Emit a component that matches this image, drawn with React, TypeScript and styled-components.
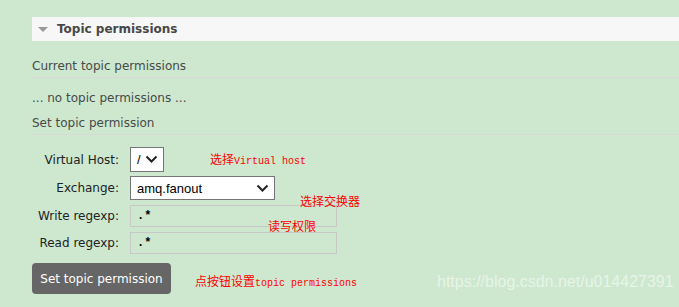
import React from "react";
import styled, { createGlobalStyle } from "styled-components";

const Global = createGlobalStyle`
  html, body { margin: 0; padding: 0; }
  body {
    background: #cde8cf;
    font-family: "DejaVu Sans", Verdana, sans-serif;
    color: #484848;
    width: 679px;
    height: 307px;
    overflow: hidden;
  }
`;

const Page = styled.div`
  position: relative;
  width: 679px;
  height: 307px;
  padding: 17px 0 0 32px;
  box-sizing: border-box;
`;

const SectionHeader = styled.div`
  height: 24px;
  background: #f7f7f7;
  display: flex;
  align-items: center;
  padding-left: 6px;
  gap: 9px;
  font-weight: bold;
  font-size: 12px;
  color: #484848;
`;

const Tri = styled.span`
  width: 0;
  height: 0;
  border-left: 5px solid transparent;
  border-right: 5px solid transparent;
  border-top: 5px solid #999;
  margin-top: 1px;
`;

const SubHeading = styled.div<{ $top: number }>`
  font-size: 12px;
  margin-top: ${(p) => p.$top}px;
  padding-bottom: 4px;
  border-bottom: 1px solid #d9d9d9;
  line-height: 14px;
`;

const Para = styled.div`
  font-size: 12px;
  line-height: 14px;
  margin-top: 13px;
`;

const Form = styled.div`
  display: grid;
  grid-template-columns: 87px auto;
  column-gap: 11px;
  row-gap: 4px;
  margin-top: 12px;
  align-items: center;
  justify-items: start;
`;

const Label = styled.label`
  justify-self: end;
  font-size: 12px;
  color: #222;
`;

const Select = styled.div<{ $w: number; $h: number }>`
  width: ${(p) => p.$w}px;
  height: ${(p) => p.$h}px;
  box-sizing: border-box;
  border: 1px solid #767676;
  background: #fff;
  display: flex;
  align-items: center;
  justify-content: space-between;
  padding: 0 5px 0 6px;
  font-family: "Liberation Sans", Arial, sans-serif;
  font-size: 13px;
  color: #000;
`;

const Input = styled.div`
  width: 207px;
  height: 22px;
  box-sizing: border-box;
  border: 1px solid #c8c8c8;
  display: flex;
  align-items: center;
  padding-left: 6px;
  font-family: "Liberation Mono", monospace;
  font-weight: bold;
  font-size: 12px;
  color: #000;
  margin-top: 1px;
`;

const Button = styled.button`
  margin-top: 9px;
  width: 139px;
  height: 31px;
  border: none;
  border-radius: 4px;
  background: #666666;
  color: #fff;
  font-family: "DejaVu Sans", Verdana, sans-serif;
  font-size: 12px;
  padding: 0;
`;

const Note = styled.div<{ $x: number; $y: number }>`
  position: absolute;
  left: ${(p) => p.$x}px;
  top: ${(p) => p.$y}px;
  color: #ff0000;
  white-space: nowrap;
  display: flex;
  align-items: baseline;
`;

const Cjk = styled.span`
  font-family: "Noto Sans CJK SC", sans-serif;
  font-size: 12px;
`;

const Mono = styled.span`
  font-family: "Liberation Mono", monospace;
  font-size: 10px;
`;

const Watermark = styled.div`
  position: absolute;
  left: 437px;
  top: 273px;
  font-family: "Liberation Sans", Arial, sans-serif;
  font-size: 16px;
  color: rgba(255, 255, 255, 0.55);
  white-space: nowrap;
`;

const Chevron = () => (
  <svg width="13" height="9" viewBox="0 0 13 9">
    <path d="M1.5 1.5 L6.5 6.5 L11.5 1.5" fill="none" stroke="#222" strokeWidth="2" />
  </svg>
);

export default function App() {
  return (
    <>
      <Global />
      <Page>
        <SectionHeader>
          <Tri />
          Topic permissions
        </SectionHeader>
        <SubHeading $top={18}>Current topic permissions</SubHeading>
        <Para>... no topic permissions ...</Para>
        <SubHeading $top={11}>Set topic permission</SubHeading>
        <Form>
          <Label>Virtual Host:</Label>
          <Select $w={34} $h={25}>
            / <Chevron />
          </Select>
          <Label>Exchange:</Label>
          <Select $w={145} $h={24}>
            amq.fanout <Chevron />
          </Select>
          <Label>Write regexp:</Label>
          <Input>.*</Input>
          <Label>Read regexp:</Label>
          <Input>.*</Input>
        </Form>
        <Button>Set topic permission</Button>
        <Note $x={210} $y={150}>
          <Cjk>选择</Cjk>
          <Mono>Virtual host</Mono>
        </Note>
        <Note $x={300} $y={192}>
          <Cjk>选择交换器</Cjk>
        </Note>
        <Note $x={268} $y={217}>
          <Cjk>读写权限</Cjk>
        </Note>
        <Note $x={195} $y={272}>
          <Cjk>点按钮设置</Cjk>
          <Mono>topic permissions</Mono>
        </Note>
        <Watermark>https://blog.csdn.net/u014427391</Watermark>
      </Page>
    </>
  );
}
